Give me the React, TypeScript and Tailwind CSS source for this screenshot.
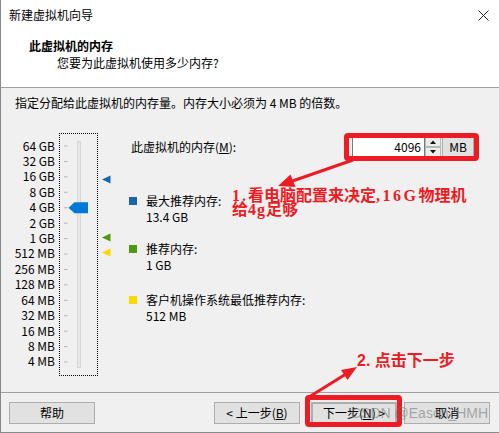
import React from "react";

const labels = [
  "64 GB", "32 GB", "16 GB", "8 GB", "4 GB", "2 GB", "1 GB", "512 MB",
  "256 MB", "128 MB", "64 MB", "32 MB", "16 MB", "8 MB", "4 MB",
];

const PITCH = 15.43;

function SliderBox() {
  const ticks = labels.map((_, i) => 12 + i * PITCH);
  const ty = 12 + 4 * PITCH;
  return (
    <div className="relative ml-[3px] h-[243px] w-[39px] border border-dotted border-black">
      <svg width="37" height="241" viewBox="0 0 37 241" className="block">
        {ticks.map((y, i) => (
          <line key={i} x1="4" x2="7.5" y1={y} y2={y} stroke="#b4b4b4" strokeWidth="1" />
        ))}
        <rect x="17.5" y="7.5" width="3" height="226" fill="#e7e7e7" stroke="#d6d6d6" />
        <polygon
          points={`8.5,${ty} 14.5,${ty - 5.5} 28,${ty - 5.5} 28,${ty + 5.5} 14.5,${ty + 5.5}`}
          fill="#0078d7"
        />
      </svg>
    </div>
  );
}

function Markers() {
  const tri = (cy: number, color: string) => (
    <polygon points={`1,${cy} 9.5,${cy - 4} 9.5,${cy + 4}`} fill={color} />
  );
  return (
    <svg width="12" height="243" viewBox="0 0 12 243" className="ml-[3px] block">
      {tri(46.5, "#1664b0")}
      {tri(104.5, "#4f9a0c")}
      {tri(119.5, "#ffd700")}
    </svg>
  );
}

function Spinner() {
  return (
    <svg width="16" height="20" viewBox="0 0 16 20" className="block">
      <rect x="0.5" y="0.5" width="15" height="9" fill="#ececec" stroke="#b9b9b9" />
      <rect x="0.5" y="10.5" width="15" height="9" fill="#ececec" stroke="#b9b9b9" />
      <polygon points="5,7 11,7 8,3.5" fill="#111" />
      <polygon points="5,13 11,13 8,16.5" fill="#111" />
    </svg>
  );
}

function Btn({ children, className = "" }: { children: React.ReactNode; className?: string }) {
  return (
    <div
      className={`flex h-[22px] w-[86px] items-center justify-center border border-[#adadad] bg-[#e1e1e1] text-[12px] leading-[16px] ${className}`}
    >
      {children}
    </div>
  );
}

export default function App() {
  return (
    <div className="relative h-[433px] w-[499px] overflow-hidden font-['Noto_Sans_CJK_SC',sans-serif] text-[12px] leading-[16px] text-black">
      <div className="flex h-[433px] w-[499px] flex-col border-b border-l border-[#8a8a8a] bg-[#f0f0f0]">
        {/* header */}
        <div className="h-[88px] shrink-0 border-b border-[#a0a0a0] bg-white">
          <div className="flex h-[30px] items-center justify-between pl-[8px] pr-[10px]">
            <span>新建虚拟机向导</span>
            <svg width="11" height="11" viewBox="0 0 11 11" className="block">
              <path d="M0.5 0.5 L10.5 10.5 M10.5 0.5 L0.5 10.5" stroke="#222" strokeWidth="1" />
            </svg>
          </div>
          <div className="mt-[8px] pl-[28px] font-bold">此虚拟机的内存</div>
          <div className="mt-[1px] pl-[56px]">您要为此虚拟机使用多少内存?</div>
        </div>

        {/* body */}
        <div className="flex flex-1 flex-col">
          <div className="pl-[14px] pt-[7px]">指定分配给此虚拟机的内存量。内存大小必须为 4 MB 的倍数。</div>
          <div className="mt-[22px] flex">
            <div className="flex w-[55px] flex-col items-end pr-[1px] pt-[4.5px]">
              {labels.map((l) => (
                <div key={l} className="h-[15.43px] leading-[15.43px]">
                  {l}
                </div>
              ))}
            </div>
            <SliderBox />
            <Markers />
            <div className="ml-[16px] flex flex-1 flex-col pr-[25px]">
              <div className="mt-[4px] flex h-[20px] items-center justify-between">
                <span className="ml-[2px]">
                  此虚拟机的内存(<span className="underline">M</span>):
                </span>
                <div className="flex h-[20px] items-stretch">
                  <div className="flex w-[73px] items-center justify-end border border-[#7a7a7a] bg-white pr-[3px]">
                    4096
                  </div>
                  <Spinner />
                  <div className="ml-[1px] flex w-[32px] items-center justify-center border border-[#adadad] bg-[#e1e1e1]">
                    MB
                  </div>
                </div>
              </div>

              <div className="mt-[36px] flex items-center">
                <div className="h-[8px] w-[8px] bg-[#1a63ad]" />
                <span className="ml-[9px]">最大推荐内存:</span>
              </div>
              <div className="pl-[17px]">13.4 GB</div>

              <div className="mt-[16px] flex items-center">
                <div className="h-[8px] w-[8px] bg-[#4f9a0c]" />
                <span className="ml-[9px]">推荐内存:</span>
              </div>
              <div className="pl-[17px]">1 GB</div>

              <div className="mt-[19px] flex items-center">
                <div className="h-[8px] w-[8px] bg-[#ffd700]" />
                <span className="ml-[9px]">客户机操作系统最低推荐内存:</span>
              </div>
              <div className="pl-[17px]">512 MB</div>
            </div>
          </div>
        </div>

        {/* footer */}
        <div className="flex h-[40px] shrink-0 border-t border-[#a0a0a0] pl-[8px] pr-[9px] pt-[9px]">
          <Btn>帮助</Btn>
          <div className="ml-auto flex">
            <Btn>
              &lt; 上一步(<span className="underline">B</span>)
            </Btn>
            <Btn className="ml-[11px] border-2 border-[#0078d7]">
              下一步(<span className="underline">N</span>) &gt;
            </Btn>
            <Btn className="ml-[7px]">取消</Btn>
          </div>
        </div>
      </div>

      {/* annotations */}
      <div className="pointer-events-none absolute left-[344px] top-[133px] h-[28px] w-[135px] rounded-[4px] border-[5px] border-[#ed1c24]" />
      <div className="pointer-events-none absolute left-[305px] top-[395px] h-[32px] w-[97px] rounded-[4px] border-[5px] border-[#ed1c24]" />

      <svg
        width="499"
        height="433"
        viewBox="0 0 499 433"
        className="pointer-events-none absolute left-0 top-0"
      >
        <line x1="353" y1="160" x2="291" y2="181.5" stroke="#ed1c24" strokeWidth="3" />
        <polygon points="278,186 295.5,187 290.5,174.5" fill="#ed1c24" />
        <line x1="309" y1="397" x2="346" y2="374" stroke="#ed1c24" strokeWidth="3" />
        <polygon points="357,367 347.5,380 341,370" fill="#ed1c24" />
      </svg>

      <div className="pointer-events-none absolute left-[232px] top-[189px] font-['Liberation_Serif','Noto_Sans_CJK_SC',serif] text-[16px] font-bold leading-[14px] text-[#ed1c24]">
        <div>
          <span className="tracking-[2px]">1.</span>看电脑配置来决定<span className="tracking-[2.5px]">,16G</span>物理机
        </div>
        <div>
          给<span className="tracking-[1px]">4g</span>足够
        </div>
      </div>

      <div className="pointer-events-none absolute left-[357px] top-[352px] font-['Liberation_Sans','Noto_Sans_CJK_SC',sans-serif] text-[16px] font-bold leading-[18px] text-[#ed1c24]">
        2. 点击下一步
      </div>

      <div className="pointer-events-none absolute left-[351px] top-[405px] font-['Liberation_Sans',sans-serif] text-[14px] leading-[16px] text-[rgba(110,110,110,0.55)]">
        CSDN @Eason_HMH
      </div>
    </div>
  );
}
